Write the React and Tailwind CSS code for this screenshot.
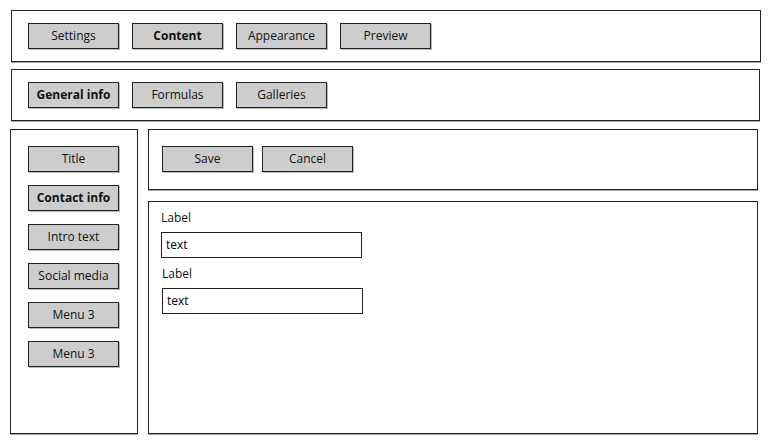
import React from 'react';

const Btn = ({ children, bold = false }) => (
    <div
        className={`w-[91px] h-[26px] flex items-center justify-center bg-[#cdcdcd] border border-[#222] text-[12px] text-[#111] shadow-[1px_1px_0_#bbb] ${bold ? 'font-bold' : ''}`}
    >
        {children}
    </div>
);

const Panel = ({ className = '', children }) => (
    <div className={`bg-white border border-[#222] shadow-[0_1px_0_#aaa] ${className}`}>{children}</div>
);

const Field = ({ label, className = '' }) => (
    <div className={className}>
        <div className="text-[12px] text-[#111] leading-[16px]">{label}</div>
        <div className="mt-[6px] w-[201px] h-[26px] border border-[#222] flex items-center px-[4px] text-[12px] text-black">
            text
        </div>
    </div>
);

export default function App() {
    return (
        <div className="w-[770px] h-[443px] bg-white pt-[10px] pl-[10px] font-['Open_Sans','DejaVu_Sans',sans-serif] overflow-hidden">
            {/* top tabs */}
            <Panel className="ml-[1px] w-[750px] h-[52px] flex items-center gap-[13px] pl-[16px]">
                <Btn>Settings</Btn>
                <Btn bold>Content</Btn>
                <Btn>Appearance</Btn>
                <Btn>Preview</Btn>
            </Panel>

            {/* sub tabs */}
            <Panel className="mt-[7px] ml-[1px] w-[749px] h-[52px] flex items-center gap-[13px] pl-[16px]">
                <Btn bold>General info</Btn>
                <Btn>Formulas</Btn>
                <Btn>Galleries</Btn>
            </Panel>

            <div className="mt-[8px] flex gap-[10px]">
                {/* sidebar */}
                <Panel className="w-[128px] h-[305px] pt-[16px] pl-[17px] flex flex-col gap-[13px]">
                    <Btn>Title</Btn>
                    <Btn bold>Contact info</Btn>
                    <Btn>Intro text</Btn>
                    <Btn>Social media</Btn>
                    <Btn>Menu 3</Btn>
                    <Btn>Menu 3</Btn>
                </Panel>

                <div className="flex flex-col gap-[11px]">
                    <Panel className="w-[610px] h-[61px] pt-[16px] pl-[13px] flex gap-[9px]">
                        <Btn>Save</Btn>
                        <Btn>Cancel</Btn>
                    </Panel>
                    <Panel className="w-[610px] h-[233px] pt-[8px] pl-[12px]">
                        <Field label="Label" />
                        <Field label="Label" className="mt-[8px] ml-[1px]" />
                    </Panel>
                </div>
            </div>
        </div>
    );
}
